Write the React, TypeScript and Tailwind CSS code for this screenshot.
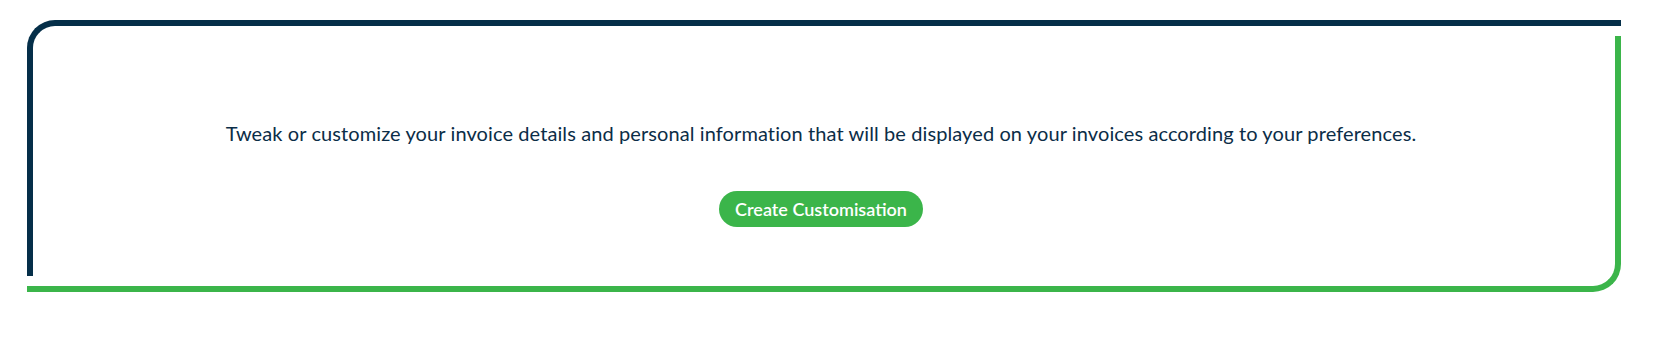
export default function App() {
  return (
    <div className="h-[339px] w-full bg-white pt-[20px] pl-[27px] pr-[32px] font-['Lato',sans-serif]">
      {/* dark frame: top + left */}
      <div className="flex flex-col border-t-[6px] border-l-[6px] border-[#052f49] rounded-tl-[28px]">
        {/* green frame: right + bottom */}
        <div className="ml-[-6px] mt-[10px] mb-[-16px] h-[256px] border-r-[6px] border-b-[6px] border-[#3bb54a] rounded-br-[28px] flex flex-col items-center pt-[83px]">
          <p className="text-[20px] leading-[28px] text-[#0b2d47] tracking-[0.1px]">
            Tweak or customize your invoice details and personal information that will be displayed on your invoices according to your preferences.
          </p>
          <button className="mt-[44px] h-[36px] rounded-full bg-[#3bb54a] px-[16px] text-[18px] font-semibold text-white">
            Create Customisation
          </button>
        </div>
      </div>
    </div>
  );
}
